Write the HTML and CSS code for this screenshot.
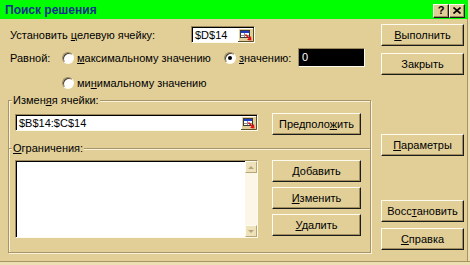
FILE: index.html
```html
<!DOCTYPE html>
<html lang="ru">
<head>
  <meta charset="UTF-8" />
  <meta name="viewport" content="width=device-width, initial-scale=1.0" />
  <title>Поиск решения</title>
  <link rel="stylesheet" href="styles.css">
</head>
<body>
  <div class="dialog">
    <div class="titlebar">
      <span class="title">Поиск решения</span>
      <div class="title-buttons">
        <span class="tb-btn">?</span>
        <span class="tb-btn">
          <svg width="8" height="7" viewBox="0 0 8 7"><path d="M0.5 0.5L7.5 6.5M7.5 0.5L0.5 6.5" stroke="#000" stroke-width="1.6"/></svg>
        </span>
      </div>
    </div>

    <div class="content">
      <div class="main">
        <div class="row target-row">
          <span class="target-label">Установить <u>ц</u>елевую ячейку:</span>
          <div class="refedit short">
            <span>$D$14</span>
            <span class="ref-btn">
              <svg width="16" height="14" viewBox="0 0 16 14">
                <rect x="0" y="0" width="16" height="14" fill="#e2cf98"/>
                <path d="M0 13.5H15.5V0" stroke="#5c4f30" fill="none"/>
                <path d="M0.5 13V0.5H15" stroke="#fff" fill="none"/>
                <rect x="2.5" y="2.5" width="9" height="7" fill="#fff" stroke="#3a3a3a"/>
                <rect x="3" y="3" width="8" height="2" fill="#1e3cc8"/>
                <path d="M3 7.5h8M6.5 5v4" stroke="#909090"/>
                <path d="M7.5 6.5L11.5 10.5" stroke="#e01010" stroke-width="1.6"/>
                <path d="M13.5 12.5L9 12L13 8Z" fill="#e01010"/>
              </svg>
            </span>
          </div>
        </div>

        <div class="row equal-row">
          <span class="equal-label">Равной:</span>
          <span class="option opt-max"><span class="radio"></span><span><u>м</u>аксимальному значению</span></span>
          <span class="option opt-value"><span class="radio checked"></span><span><u>з</u>начению:</span></span>
          <div class="value-box">0</div>
        </div>

        <div class="row min-row">
          <span class="option"><span class="radio"></span><span>ми<u>н</u>имальному значению</span></span>
        </div>

        <div class="group group-cells">
          <div class="group-title">Измен<u>я</u>я ячейки:</div>
          <div class="group-row">
            <div class="refedit long">
              <span>$B$14:$C$14</span>
              <span class="ref-btn">
                <svg width="16" height="14" viewBox="0 0 16 14">
                  <rect x="0" y="0" width="16" height="14" fill="#e2cf98"/>
                  <path d="M0 13.5H15.5V0" stroke="#5c4f30" fill="none"/>
                  <path d="M0.5 13V0.5H15" stroke="#fff" fill="none"/>
                  <rect x="2.5" y="2.5" width="9" height="7" fill="#fff" stroke="#3a3a3a"/>
                  <rect x="3" y="3" width="8" height="2" fill="#1e3cc8"/>
                  <path d="M3 7.5h8M6.5 5v4" stroke="#909090"/>
                  <path d="M7.5 6.5L11.5 10.5" stroke="#e01010" stroke-width="1.6"/>
                  <path d="M13.5 12.5L9 12L13 8Z" fill="#e01010"/>
                </svg>
              </span>
            </div>
            <button class="btn">Предполо<u>ж</u>ить</button>
          </div>
        </div>

        <div class="group group-limits">
          <div class="group-title"><u>О</u>граничения:</div>
          <div class="group-row">
            <div class="listbox">
              <div class="scrollbar">
                <span class="arrow up"></span>
                <span class="track"></span>
                <span class="arrow down"></span>
              </div>
            </div>
            <div class="btn-stack">
              <button class="btn"><u>Д</u>обавить</button>
              <button class="btn"><u>И</u>зменить</button>
              <button class="btn"><u>У</u>далить</button>
            </div>
          </div>
        </div>
      </div>

      <div class="side">
        <button class="btn run-btn"><u>В</u>ыполнить</button>
        <button class="btn close-btn">Закрыть</button>
        <button class="btn params-btn"><u>П</u>араметры</button>
        <button class="btn reset-btn">Восс<u>т</u>ановить</button>
        <button class="btn help-btn"><u>С</u>правка</button>
      </div>
    </div>
  </div>
</body>
</html>
```

FILE: styles.css
```css
* {
  box-sizing: border-box;
}

body {
  margin: 0;
  font-family: "Liberation Sans", Arial, sans-serif;
  font-size: 11px;
  color: #000;
  background: #e2cf98;
}

u {
  text-decoration-thickness: 1px;
  text-underline-offset: 1px;
}

.dialog {
  width: 470px;
  height: 265px;
  background: #e2cf98;
  box-shadow: inset 0 -3px 0 #ecdfb4, inset 0 -4px 0 #a8945f, inset -2px 0 0 #ecdfb4, inset -3px 0 0 #a8945f;
  overflow: hidden;
}

.titlebar {
  height: 19px;
  margin-right: 2px;
  background: #00ff00;
  display: flex;
  align-items: center;
  justify-content: space-between;
  padding: 0 3px 0 5px;
}

.title {
  font-weight: bold;
  font-size: 12px;
  color: #12308e;
}

.title-buttons {
  display: flex;
  margin-top: 2px;
}

.tb-btn {
  width: 16px;
  height: 14px;
  background: #e2cf98;
  border: 1px solid;
  border-color: #fffbee #1b1b1b #1b1b1b #fffbee;
  box-shadow: inset -1px -1px 0 #a28f60;
  display: flex;
  align-items: center;
  justify-content: center;
  font-weight: bold;
  font-size: 11px;
  line-height: 1;
}

.content {
  display: flex;
}

.main {
  width: 372px;
}

.side {
  margin-left: 9px;
  width: 83px;
  display: flex;
  flex-direction: column;
}

.row {
  display: flex;
  align-items: center;
}

.target-row {
  margin: 7px 0 0 10px;
  height: 17px;
}

.target-label {
  width: 181px;
}

.refedit {
  height: 17px;
  background: #fff;
  border: 1px solid;
  border-color: #9c8a5e #fffbee #fffbee #9c8a5e;
  box-shadow: inset 1px 1px 0 #000;
  display: flex;
  align-items: center;
  justify-content: space-between;
  padding: 1px 0 0 3px;
}

.refedit.short {
  width: 64px;
}

.refedit.long {
  width: 243px;
  margin-top: 1px;
}

.ref-btn svg {
  display: block;
}

.equal-row {
  margin: 5px 0 0 10px;
  height: 19px;
}

.equal-label {
  width: 52px;
}

.option {
  display: flex;
  align-items: center;
  gap: 3px;
}

.opt-max {
  width: 162px;
}

.opt-value {
  width: 74px;
}

.radio {
  flex: none;
  width: 12px;
  height: 12px;
  border-radius: 50%;
  background: #fff;
  border: 1px solid;
  border-color: #9b8a5f #fffaf0 #fffaf0 #9b8a5f;
  box-shadow: inset 1px 1px 0 #4a4030;
  position: relative;
}

.radio.checked::after {
  content: "";
  position: absolute;
  left: 3px;
  top: 3px;
  width: 4px;
  height: 4px;
  border-radius: 50%;
  background: #000;
}

.value-box {
  width: 67px;
  height: 19px;
  background: #000;
  color: #fff;
  border: 1px solid;
  border-color: #9c8a5e #fffbee #fffbee #9c8a5e;
  padding-left: 3px;
  line-height: 17px;
}

.min-row {
  margin: 8px 0 0 62px;
  height: 16px;
}

.group {
  margin-left: 8px;
  width: 363px;
  border: 1px solid #a8956a;
  box-shadow: inset 1px 1px 0 #fbf3da, 1px 1px 0 #fbf3da;
  padding: 0 0 0 6px;
}

.group-cells {
  margin-top: 9px;
  border-bottom: none;
  padding-bottom: 13px;
}

.group-limits {
  padding-bottom: 14px;
}

.group-title {
  margin: -7px 0 0 -3px;
  padding: 0 1px;
  width: fit-content;
  background: #e2cf98;
  line-height: 13px;
}

.group-row {
  display: flex;
  align-items: flex-start;
  gap: 14px;
}

.group-cells .group-row {
  margin-top: 6px;
}

.group-limits .group-row {
  margin-top: 5px;
}

.listbox {
  width: 243px;
  height: 78px;
  background: #fff;
  border: 1px solid;
  border-color: #9c8a5e #fffbee #fffbee #9c8a5e;
  box-shadow: inset 1px 1px 0 #000;
  display: flex;
  justify-content: flex-end;
}

.scrollbar {
  width: 12px;
  display: flex;
  flex-direction: column;
  background: #fbf6e8;
}

.track {
  flex: 1;
}

.arrow {
  height: 12px;
  background: #eee2bb;
  border: 1px solid;
  border-color: #fffbee #b9a676 #b9a676 #fffbee;
  display: flex;
  align-items: center;
  justify-content: center;
}

.arrow::before {
  content: "";
  border-left: 3px solid transparent;
  border-right: 3px solid transparent;
}

.arrow.up::before {
  border-bottom: 3px solid #b7a579;
}

.arrow.down::before {
  border-top: 3px solid #b7a579;
}

.btn-stack {
  display: flex;
  flex-direction: column;
  gap: 5px;
}

.btn {
  width: 89px;
  height: 22px;
  padding: 0;
  background: #e2cf98;
  border: 1px solid;
  border-color: #fffbee #1b1b1b #1b1b1b #fffbee;
  box-shadow: inset -1px -1px 0 #a28f60;
  font-family: inherit;
  font-size: 11px;
  color: #000;
}

.side .btn {
  width: 83px;
}

.run-btn {
  margin-top: 5px;
}

.close-btn {
  margin-top: 7px;
}

.params-btn {
  margin-top: 59px;
}

.reset-btn {
  margin-top: 44px;
}

.help-btn {
  margin-top: 6px;
}
```
